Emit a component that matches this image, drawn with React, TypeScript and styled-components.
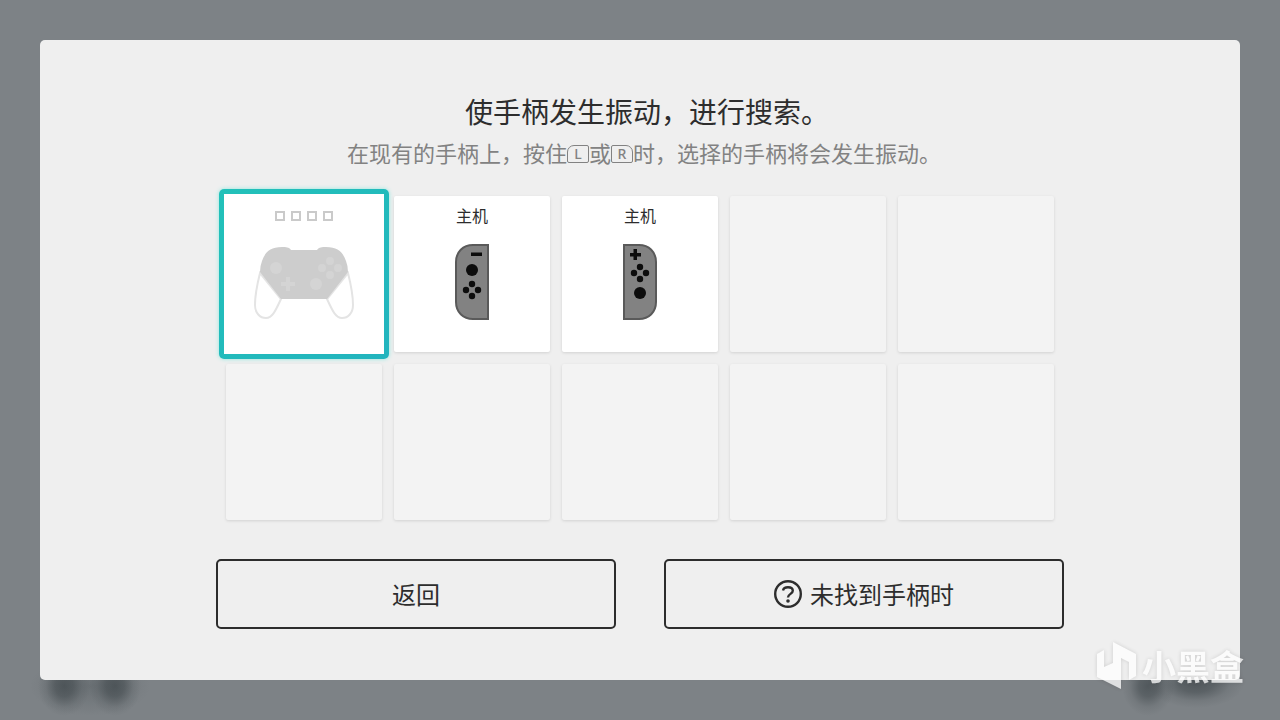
import React from "react";
import styled, { createGlobalStyle } from "styled-components";

const GlobalStyle = createGlobalStyle`
  *, *::before, *::after { box-sizing: border-box; }
  body {
    margin: 0;
    background: #7d8286;
    font-family: "Noto Sans CJK SC", "Noto Sans", sans-serif;
    color: #2d2d2d;
  }
  button { font: inherit; color: inherit; cursor: pointer; }
`;

const blob = "rgba(58, 66, 70, 0.65) 0%, rgba(58, 66, 70, 0.5) 35%, rgba(58, 66, 70, 0.14) 70%, transparent 100%";

const Page = styled.main`
  position: relative;
  display: flex;
  min-height: 100vh;
  padding: 40px;
  background:
    radial-gradient(ellipse 26px 30px at 64px calc(100% - 34px), ${blob}),
    radial-gradient(ellipse 26px 30px at 115px calc(100% - 34px), ${blob}),
    radial-gradient(ellipse 60px 30px at 90px calc(100% - 34px), rgba(64, 72, 76, 0.3), transparent 100%),
    radial-gradient(ellipse 26px 30px at calc(100% - 132px) calc(100% - 34px), ${blob}),
    radial-gradient(ellipse 48px 24px at calc(100% - 84px) calc(100% - 36px), ${blob}),
    #7d8286;
`;

const Panel = styled.section`
  flex: 1;
  display: flex;
  flex-direction: column;
  align-items: center;
  padding: 51px 24px;
  background: #efefef;
  border-radius: 5px;
`;

/* The closing full stop fills only half of its em box, so the line is optically centred. */
const Title = styled.h1`
  margin: 0;
  padding-left: 0.5em;
  font-size: 28px;
  line-height: 40px;
  font-weight: 400;
`;

const Hint = styled.p`
  display: flex;
  align-items: center;
  margin: 3px 0 0;
  padding-left: 8px;
  font-size: 22px;
  line-height: 36px;
  color: #828282;
`;

const KeyCap = styled.kbd<{ $side: "left" | "right" }>`
  display: flex;
  align-items: center;
  justify-content: center;
  width: 22px;
  height: 18px;
  margin-top: 4px;
  border: 1px solid #828282;
  border-radius: ${(p) => (p.$side === "left" ? "7px 2px 2px 2px" : "2px 7px 2px 2px")};
  font: 500 14px/16px "Noto Sans", sans-serif;
`;

const Grid = styled.ul`
  display: grid;
  grid-template-columns: repeat(5, 156px);
  grid-auto-rows: 156px;
  gap: 12px;
  margin: 26px 0 0;
  padding: 0;
  list-style: none;
`;

const EmptySlot = styled.li`
  background: #f3f3f3;
  border-radius: 2px;
  box-shadow: 0 1px 3px rgba(0, 0, 0, 0.12);
`;

const Slot = styled.li`
  display: flex;
`;

const Card = styled.button<{ $selected?: boolean }>`
  position: relative;
  flex: 1;
  display: flex;
  flex-direction: column;
  align-items: center;
  padding: 7px 0 0;
  border: 0;
  border-radius: 2px;
  background: #fff;
  box-shadow: 0 1px 3px rgba(0, 0, 0, 0.12);
  ${(p) =>
    p.$selected &&
    `
    z-index: 1;
    &::before, &::after { content: ""; position: absolute; z-index: -1; }
    &::before {
      inset: -7px;
      border-radius: 5px;
      background: linear-gradient(135deg, #22c1b9, #22b4be);
      box-shadow: 0 0 4px #8fe8e0;
    }
    &::after { inset: -2px; background: #fff; }
  `}
`;

const CardLabel = styled.span`
  font-size: 16px;
  line-height: 24px;
`;

const Lamps = styled.span`
  display: flex;
  gap: 6px;
  padding: 8px 0 6px;
`;

const Lamp = styled.span`
  width: 10px;
  height: 10px;
  border: 2px solid #cacaca;
`;

const Art = styled.svg`
  display: block;
  margin-top: 17px;
`;

const Actions = styled.div`
  display: flex;
  gap: 48px;
  width: 100%;
  max-width: 848px;
  margin-top: 39px;
`;

const ActionButton = styled.button`
  flex: 1;
  display: flex;
  align-items: center;
  justify-content: center;
  gap: 8px;
  height: 70px;
  padding: 0;
  border: 2px solid #2d2d2d;
  border-radius: 5px;
  background: transparent;
  font-size: 24px;
  line-height: 36px;
`;

const Watermark = styled.div`
  position: absolute;
  right: 36px;
  bottom: 30px;
  z-index: 2;
  display: flex;
  align-items: center;
  gap: 6px;
  color: #fff;
  opacity: 0.75;
  font-size: 34px;
  line-height: 48px;
  font-weight: 700;
  filter: drop-shadow(0 0 2px rgba(0, 0, 0, 0.18));
`;

function ProController() {
  return (
    <Art width="104" height="76" viewBox="0 -1 104 76" aria-hidden="true">
      <g fill="#fff" stroke="#e4e4e4" strokeWidth="2">
        <path d="M8 28C5 40 3 50 3 60C3 68 8 73 14 73C20 73 23 67 29 54Z" />
        <path d="M96 28C99 40 101 50 101 60C101 68 96 73 90 73C84 73 81 67 75 54Z" />
      </g>
      <path
        fill="#cdcdcd"
        d="M39 5H65C67 2 70 2 74 2C87 2 91 8 94 16Q96 21 96 27L75 54H29L8 27Q8 21 10 16C13 8 17 2 30 2C34 2 37 2 39 5Z"
      />
      <g fill="#d4d4d4">
        <circle cx="24" cy="23" r="6" />
        <circle cx="64" cy="39" r="6" />
        <path d="M34 32h4v5h5v4h-5v5h-4v-5h-5v-4h5z" />
        <circle cx="78" cy="16" r="4" />
        <circle cx="78" cy="30" r="4" />
        <circle cx="70" cy="23" r="4" />
        <circle cx="86" cy="23" r="4" />
      </g>
    </Art>
  );
}

function LeftJoyCon() {
  return (
    <Art width="34" height="76" viewBox="0 0 34 76" aria-hidden="true">
      <path fill="#828282" stroke="#5a5a5a" strokeWidth="2" d="M33 1V75H18C8 75 1 68 1 58V18C1 8 8 1 18 1Z" />
      <g fill="#0c0c0c">
        <path d="M16 8.500h11v3.500H16z" />
        <circle cx="17" cy="26" r="6" />
        <circle cx="17" cy="40" r="3.200" />
        <circle cx="11" cy="46" r="3.200" />
        <circle cx="23" cy="46" r="3.200" />
        <circle cx="17" cy="52" r="3.200" />
      </g>
    </Art>
  );
}

function RightJoyCon() {
  return (
    <Art width="34" height="76" viewBox="0 0 34 76" aria-hidden="true">
      <path fill="#828282" stroke="#5a5a5a" strokeWidth="2" d="M1 1V75H16C26 75 33 68 33 58V18C33 8 26 1 16 1Z" />
      <g fill="#0c0c0c">
        <path d="M10.500 5h3.500v4h4v3.500h-4v3.500h-3.500v-3.500H7V9h3.500z" />
        <circle cx="17" cy="23" r="3.200" />
        <circle cx="11" cy="29" r="3.200" />
        <circle cx="23" cy="29" r="3.200" />
        <circle cx="17" cy="35" r="3.200" />
        <circle cx="17" cy="49" r="6" />
      </g>
    </Art>
  );
}

function HelpIcon() {
  return (
    <svg width="28" height="28" viewBox="0 0 28 28" fill="none" stroke="#2d2d2d" aria-hidden="true">
      <circle cx="14" cy="14" r="12.800" strokeWidth="2.400" />
      <path strokeWidth="2.400" d="M9 10.500C9.500 8.300 11.300 7.300 14 7.300C17 7.300 18.800 8.600 18.800 10.800C18.800 14 14 13.800 14 17.500" />
      <circle cx="14" cy="21" r="1.800" fill="#2d2d2d" stroke="none" />
    </svg>
  );
}

function WatermarkLogo() {
  return (
    <svg width="40" height="48" viewBox="0 0 40 48" fill="currentColor" aria-hidden="true">
      <path d="M17 0L40 12V34L33 38V20L25 16V47L1 35V12L8 8V25L17 21Z" />
    </svg>
  );
}

const EMPTY_SLOTS = 7;

export default function App() {
  return (
    <>
      <GlobalStyle />
      <Page>
        <Panel>
          <Title>使手柄发生振动，进行搜索。</Title>
          <Hint>
            在现有的手柄上，按住<KeyCap $side="left">L</KeyCap>或<KeyCap $side="right">R</KeyCap>
            时，选择的手柄将会发生振动。
          </Hint>
          <Grid>
            <Slot>
              <Card type="button" $selected aria-label="Pro 手柄">
                <Lamps>
                  <Lamp />
                  <Lamp />
                  <Lamp />
                  <Lamp />
                </Lamps>
                <ProController />
              </Card>
            </Slot>
            <Slot>
              <Card type="button">
                <CardLabel>主机</CardLabel>
                <LeftJoyCon />
              </Card>
            </Slot>
            <Slot>
              <Card type="button">
                <CardLabel>主机</CardLabel>
                <RightJoyCon />
              </Card>
            </Slot>
            {Array.from({ length: EMPTY_SLOTS }, (_, i) => (
              <EmptySlot key={i} />
            ))}
          </Grid>
          <Actions>
            <ActionButton type="button">返回</ActionButton>
            <ActionButton type="button">
              <HelpIcon />
              未找到手柄时
            </ActionButton>
          </Actions>
        </Panel>
        <Watermark>
          <WatermarkLogo />
          小黑盒
        </Watermark>
      </Page>
    </>
  );
}
